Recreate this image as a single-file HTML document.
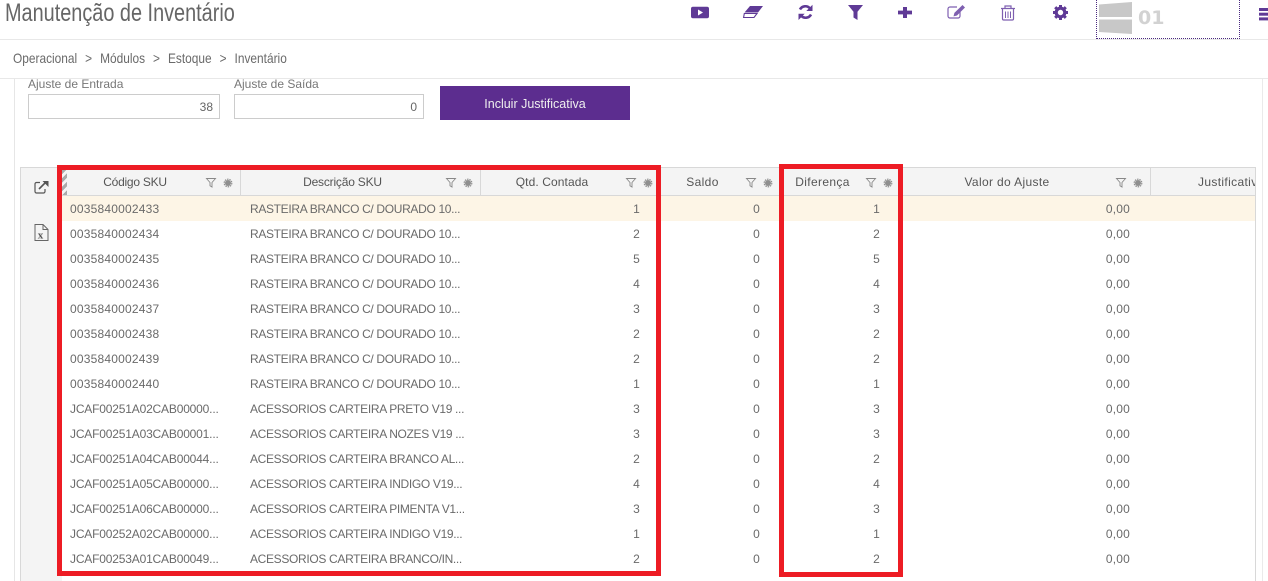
<!DOCTYPE html>
<html lang="pt"><head><meta charset="utf-8"><title>Manutenção de Inventário</title>
<style>
html,body{margin:0;padding:0;background:#fff}
body{width:1268px;height:581px;overflow:hidden;position:relative;font-family:"Liberation Sans",sans-serif;color:#666}
.a{position:absolute}
.cond{position:absolute;white-space:nowrap;transform-origin:0 0}
.r{position:absolute;left:62px;width:1193px;height:25px;font-size:12px;line-height:27px;letter-spacing:.2px;color:#6a6a6a}
.r span{position:absolute;white-space:nowrap}
.c1{left:8px}.c2{left:188px;letter-spacing:-.33px}
.j{letter-spacing:-.18px}
.c3{right:615px}.c4{right:495px}.c5{right:375px}.c6{right:125px}
.h{position:absolute;top:168px;height:27px;line-height:28px;font-size:12px;letter-spacing:.35px;color:#555;white-space:nowrap;transform:translateX(-50%)}
.v{position:absolute;top:168px;width:1px;height:27px;background:#d8d8d8}
.red{position:absolute;border:5px solid #ed1c24;box-sizing:border-box}
svg{display:block}
</style></head><body>

<div class="cond" style="left:5px;top:-2px;font-size:25px;line-height:30px;color:#666;transform:scaleX(.795)">Manutenção de Inventário</div>
<div class="a" style="left:0;top:39px;width:1268px;height:1px;background:#e8e8e8"></div>
<div class="cond" style="left:13px;top:50px;font-size:14px;line-height:16px;color:#6a6a6a;transform:scaleX(.85);word-spacing:5.5px">Operacional &gt; Módulos &gt; Estoque &gt; Inventário</div>
<div class="a" style="left:0;top:78px;width:1268px;height:1px;background:#e8e8e8"></div>

<!-- toolbar -->
<svg class="a" style="left:690px;top:4px" width="380" height="18" viewBox="0 0 380 18" fill="#5f3a96">
 <path fill-rule="evenodd" d="M3 2.700h14a2 2 0 0 1 2 2v7.600a2 2 0 0 1-2 2H3a2 2 0 0 1-2-2V4.700a2 2 0 0 1 2-2zM8 5.500v6L13 8.500z"/>
 <path d="M60 2h13l-5 6.500H54.500z"/><path d="M54.300 9.500h12.700l-3 4H53.600z" fill="none" stroke="#5f3a96" stroke-width="1.100"/>
 <path fill="none" stroke="#5f3a96" stroke-width="2.600" d="M110 5.500a6 6 0 0 1 10-1M121 10.500a6 6 0 0 1-10 1"/><path d="M122.500 .800v6.200h-6.200zM108.500 16v-6.200h6.200z"/>
 <path d="M158 1h15l-5.500 6.800V16l-4-2.500V7.800z"/>
 <path d="M213 3h4v3.600h5v3.800h-5V14h-4v-3.600h-5V6.600h5z"/>
 <path fill="none" stroke="#7e5fb0" stroke-width="1.200" d="M267 3h-7a2 2 0 0 0-2 2v7a2 2 0 0 0 2 2h8a2 2 0 0 0 2-2V8"/><path fill="#7e5fb0" d="M272.500 1l2.500 2.500-8 8-3.500.9.900-3.500z"/>
 <path fill="none" stroke="#7e5fb0" stroke-width="1.200" d="M312.500 5v9.800a1.200 1.200 0 0 0 1.200 1.200h8.600a1.200 1.200 0 0 0 1.200-1.200V5M311 4.500h14M315 4.500V2h6v2.500"/><path fill="none" stroke="#7e5fb0" d="M315.500 7.500v6.500M318 7.500v6.500M320.500 7.500v6.500"/>
 <circle cx="370.500" cy="8.500" r="4.300" fill="none" stroke="#5f3a96" stroke-width="3.200"/>
 <path fill="none" stroke="#5f3a96" stroke-width="3" d="M370.500 1v2.500M370.500 13.500v2.500M363 8.500h2.500M375.500 8.500h2.500M365.200 3.200l1.800 1.800M374 12l1.800 1.800M375.800 3.200L374 5M367 12l-1.800 1.800"/>
</svg>
<div class="a" style="left:1096px;top:-2px;width:142px;height:39px;border:1px dotted #4a2a80;box-sizing:content-box"></div>
<svg class="a" style="left:1099px;top:1px" width="34" height="34" viewBox="0 0 34 34" fill="#c8c8c8"><path d="M0 3.500L33 1v15H0zM0 18.500h33V33L0 31z"/></svg>
<div class="cond" style="left:1138px;top:6px;font-family:'DejaVu Sans',sans-serif;font-size:19px;line-height:24px;font-weight:bold;color:#d2d2d2">01</div>
<div class="a" style="left:1259px;top:8px;width:9px;height:2.500px;background:#5f3a96;box-shadow:0 4.700px 0 #5f3a96,0 9.400px 0 #5f3a96"></div>

<!-- form -->
<div class="a" style="left:14px;top:79px;width:1px;height:502px;background:#e6e6e6"></div>
<div class="a" style="left:1262px;top:79px;width:1px;height:502px;background:#eaeaea"></div>
<div class="cond" style="left:28px;top:77px;font-size:12px;line-height:14px;color:#777">Ajuste de Entrada</div>
<div class="cond" style="left:234px;top:77px;font-size:12px;line-height:14px;color:#777">Ajuste de Saída</div>
<div class="a" style="left:28px;top:94px;width:192px;height:25px;border:1px solid #ccc;box-sizing:border-box;text-align:right;padding-right:6px;font-size:12px;line-height:25px;color:#666">38</div>
<div class="a" style="left:234px;top:94px;width:190px;height:25px;border:1px solid #ccc;box-sizing:border-box;text-align:right;padding-right:6px;font-size:12px;line-height:25px;color:#666">0</div>
<div class="a" style="left:440px;top:86px;width:190px;height:34px;background:#5c2d8f;color:#eee;text-align:center;font-size:12.500px;line-height:36px">Incluir Justificativa</div>

<!-- table frame -->
<div class="a" style="left:20px;top:167px;width:1236px;height:414px;border:1px solid #d8d8d8;border-bottom:0;box-sizing:border-box"></div>
<div class="a" style="left:21px;top:168px;width:41px;height:413px;background:#f4f4f4"></div>
<div class="a" style="left:62px;top:168px;width:1193px;height:27px;background:#f4f4f4;border-bottom:1px solid #d8d8d8"></div>
<div class="a" style="left:62px;top:196px;width:1193px;height:25px;background:#fdf5e6"></div>
<div class="a" style="left:62px;top:170px;width:5px;height:25px;background:repeating-linear-gradient(135deg,#aaa 0 3px,#f4f4f4 3px 6px)"></div>

<svg class="a" style="left:34px;top:180px" width="15" height="14" viewBox="0 0 15 14" fill="none" stroke="#555" stroke-width="1.200"><path d="M6 2.500H2.500A1.500 1.500 0 0 0 1 4v7.500A1.500 1.500 0 0 0 2.500 13h7a1.500 1.500 0 0 0 1.500-1.500V9"/><path stroke-width="1.600" d="M5 9l6.500-6.500"/><path fill="#555" stroke="none" d="M8.500 1h6v6z"/></svg>
<svg class="a" style="left:34px;top:224px" width="15" height="17" viewBox="0 0 15 17" fill="none" stroke="#666"><path d="M1 .500h8l5 5v11H1zM9 .500v5h5"/><text x="3.700" y="14.500" font-family="Liberation Serif,serif" font-size="11" font-weight="bold" fill="#555" stroke="none">x</text></svg>

<!-- header -->
<div class="h" style="left:135px;letter-spacing:-.25px">Código SKU</div>
<div class="h" style="left:342.500px;letter-spacing:-.2px">Descrição SKU</div>
<div class="h" style="left:552px;letter-spacing:.1px">Qtd. Contada</div>
<div class="h" style="left:702.500px">Saldo</div>
<div class="h" style="left:822.500px">Diferença</div>
<div class="h" style="left:1007px">Valor do Ajuste</div>
<div class="a" style="left:1151px;top:168px;width:104px;height:27px;overflow:hidden"><div class="a" style="left:47px;top:0;line-height:28px;font-size:12px;letter-spacing:.35px;color:#555;white-space:nowrap">Justificativa</div></div>
<div class="v" style="left:240px"></div><div class="v" style="left:480px"></div><div class="v" style="left:1150px"></div>

<svg class="a" style="left:200px;top:177px" width="980" height="12" viewBox="0 0 980 12">
<defs><g id="i"><path d="M6.500 1.500h9l-3.500 4v4.500l-2-1.300V5.500z" fill="none" stroke="#888" stroke-width=".9"/><circle cx="28" cy="6" r="3" fill="#8f8f8f"/><circle cx="28" cy="6" r="3.800" fill="none" stroke="#8f8f8f" stroke-width="1.200" stroke-dasharray="1.500 .9"/></g></defs>
<use href="#i" x="0"/><use href="#i" x="240"/><use href="#i" x="420"/><use href="#i" x="540"/><use href="#i" x="660"/><use href="#i" x="910"/>
</svg>

<!-- rows -->
<div class="r" style="top:196px"><span class="c1">0035840002433</span><span class="c2">RASTEIRA BRANCO C/ DOURADO 10...</span><span class="c3">1</span><span class="c4">0</span><span class="c5">1</span><span class="c6">0,00</span></div>
<div class="r" style="top:221px"><span class="c1">0035840002434</span><span class="c2">RASTEIRA BRANCO C/ DOURADO 10...</span><span class="c3">2</span><span class="c4">0</span><span class="c5">2</span><span class="c6">0,00</span></div>
<div class="r" style="top:246px"><span class="c1">0035840002435</span><span class="c2">RASTEIRA BRANCO C/ DOURADO 10...</span><span class="c3">5</span><span class="c4">0</span><span class="c5">5</span><span class="c6">0,00</span></div>
<div class="r" style="top:271px"><span class="c1">0035840002436</span><span class="c2">RASTEIRA BRANCO C/ DOURADO 10...</span><span class="c3">4</span><span class="c4">0</span><span class="c5">4</span><span class="c6">0,00</span></div>
<div class="r" style="top:296px"><span class="c1">0035840002437</span><span class="c2">RASTEIRA BRANCO C/ DOURADO 10...</span><span class="c3">3</span><span class="c4">0</span><span class="c5">3</span><span class="c6">0,00</span></div>
<div class="r" style="top:321px"><span class="c1">0035840002438</span><span class="c2">RASTEIRA BRANCO C/ DOURADO 10...</span><span class="c3">2</span><span class="c4">0</span><span class="c5">2</span><span class="c6">0,00</span></div>
<div class="r" style="top:346px"><span class="c1">0035840002439</span><span class="c2">RASTEIRA BRANCO C/ DOURADO 10...</span><span class="c3">2</span><span class="c4">0</span><span class="c5">2</span><span class="c6">0,00</span></div>
<div class="r" style="top:371px"><span class="c1">0035840002440</span><span class="c2">RASTEIRA BRANCO C/ DOURADO 10...</span><span class="c3">1</span><span class="c4">0</span><span class="c5">1</span><span class="c6">0,00</span></div>
<div class="r" style="top:396px"><span class="c1 j">JCAF00251A02CAB00000...</span><span class="c2">ACESSORIOS CARTEIRA PRETO V19 ...</span><span class="c3">3</span><span class="c4">0</span><span class="c5">3</span><span class="c6">0,00</span></div>
<div class="r" style="top:421px"><span class="c1 j">JCAF00251A03CAB00001...</span><span class="c2">ACESSORIOS CARTEIRA NOZES V19 ...</span><span class="c3">3</span><span class="c4">0</span><span class="c5">3</span><span class="c6">0,00</span></div>
<div class="r" style="top:446px"><span class="c1 j">JCAF00251A04CAB00044...</span><span class="c2">ACESSORIOS CARTEIRA BRANCO AL...</span><span class="c3">2</span><span class="c4">0</span><span class="c5">2</span><span class="c6">0,00</span></div>
<div class="r" style="top:471px"><span class="c1 j">JCAF00251A05CAB00000...</span><span class="c2">ACESSORIOS CARTEIRA INDIGO V19...</span><span class="c3">4</span><span class="c4">0</span><span class="c5">4</span><span class="c6">0,00</span></div>
<div class="r" style="top:496px"><span class="c1 j">JCAF00251A06CAB00000...</span><span class="c2">ACESSORIOS CARTEIRA PIMENTA V1...</span><span class="c3">3</span><span class="c4">0</span><span class="c5">3</span><span class="c6">0,00</span></div>
<div class="r" style="top:521px"><span class="c1 j">JCAF00252A02CAB00000...</span><span class="c2">ACESSORIOS CARTEIRA INDIGO V19...</span><span class="c3">1</span><span class="c4">0</span><span class="c5">1</span><span class="c6">0,00</span></div>
<div class="r" style="top:546px"><span class="c1 j">JCAF00253A01CAB00049...</span><span class="c2">ACESSORIOS CARTEIRA BRANCO/IN...</span><span class="c3">2</span><span class="c4">0</span><span class="c5">2</span><span class="c6">0,00</span></div>

<!-- red highlight boxes -->
<div class="red" style="left:57px;top:165px;width:604px;height:411px"></div>
<div class="red" style="left:779px;top:164px;width:124px;height:413px"></div>
</body></html>
